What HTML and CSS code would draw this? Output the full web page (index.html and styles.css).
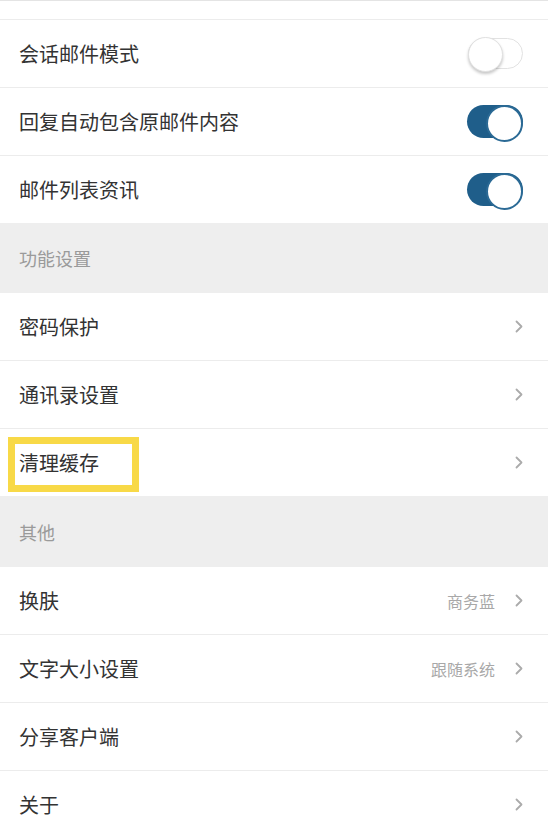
FILE: index.html
```html
<!DOCTYPE html>
<html lang="zh-CN">
<head>
<meta charset="utf-8">
<title>设置</title>
<link rel="stylesheet" href="styles.css">
</head>
<body>
<div class="top"></div>
<div class="group">
  <div class="row"><span class="label">会话邮件模式</span><span class="switch"></span></div>
  <div class="row"><span class="label">回复自动包含原邮件内容</span><span class="switch on"></span></div>
  <div class="row"><span class="label">邮件列表资讯</span><span class="switch on"></span></div>
</div>
<div class="section">功能设置</div>
<div class="group">
  <div class="row"><span class="label">密码保护</span><span class="right"><svg class="chev" width="8" height="13" viewBox="0 0 8 13"><polyline points="1.5,1.5 6.5,6.5 1.5,11.5"/></svg></span></div>
  <div class="row"><span class="label">通讯录设置</span><span class="right"><svg class="chev" width="8" height="13" viewBox="0 0 8 13"><polyline points="1.5,1.5 6.5,6.5 1.5,11.5"/></svg></span></div>
  <div class="row marked"><span class="label">清理缓存</span><span class="highlight"></span><span class="right"><svg class="chev" width="8" height="13" viewBox="0 0 8 13"><polyline points="1.5,1.5 6.5,6.5 1.5,11.5"/></svg></span></div>
</div>
<div class="section section-b">其他</div>
<div class="group">
  <div class="row"><span class="label">换肤</span><span class="right"><span class="value">商务蓝</span><svg class="chev" width="8" height="13" viewBox="0 0 8 13"><polyline points="1.5,1.5 6.5,6.5 1.5,11.5"/></svg></span></div>
  <div class="row"><span class="label">文字大小设置</span><span class="right"><span class="value">跟随系统</span><svg class="chev" width="8" height="13" viewBox="0 0 8 13"><polyline points="1.5,1.5 6.5,6.5 1.5,11.5"/></svg></span></div>
  <div class="row"><span class="label">分享客户端</span><span class="right"><svg class="chev" width="8" height="13" viewBox="0 0 8 13"><polyline points="1.5,1.5 6.5,6.5 1.5,11.5"/></svg></span></div>
  <div class="row"><span class="label">关于</span><span class="right"><svg class="chev" width="8" height="13" viewBox="0 0 8 13"><polyline points="1.5,1.5 6.5,6.5 1.5,11.5"/></svg></span></div>
</div>
</body>
</html>
```
FILE: styles.css
```css
* { box-sizing: border-box; }
html, body { margin: 0; padding: 0; background: #ffffff; }
body {
  font-family: "Noto Sans CJK SC", "Noto Sans", sans-serif;
  color: #333333;
  overflow: hidden;
}
.top {
  height: 20px;
  border-top: 1px solid #e4e4e4;
  border-bottom: 1px solid #ececec;
}
.group { background: #ffffff; }
.row {
  height: 68px;
  display: flex;
  align-items: center;
  justify-content: space-between;
  padding: 0 25px 0 19px;
  border-bottom: 1px solid #ececec;
}
.row:last-child { height: 67px; border-bottom: none; }
.marked { position: relative; }
.label {
  font-size: 20px;
  line-height: 1;
  color: #333333;
}
.section {
  height: 70px;
  background: #eeeeee;
  display: flex;
  align-items: center;
  padding-left: 19px;
  font-size: 18px;
  color: #9a9a9a;
}
.section-b { height: 71px; }
.right {
  display: flex;
  align-items: center;
  gap: 20px;
}
.value {
  font-size: 16px;
  color: #a8a8a8;
}
.chev { display: block; }
.chev polyline {
  fill: none;
  stroke: #ababab;
  stroke-width: 1.8;
  stroke-linecap: round;
  stroke-linejoin: round;
}
.switch {
  position: relative;
  width: 55px;
  height: 31px;
  border-radius: 16px;
  background: #ffffff;
  border: 1px solid #e2e2e2;
  flex: none;
}
.switch::after {
  content: "";
  position: absolute;
  left: -1px;
  top: -2px;
  width: 33px;
  height: 33px;
  border-radius: 50%;
  background: #ffffff;
  border: 1px solid #e0e0e0;
  box-shadow: 0 2px 3px rgba(0, 0, 0, 0.22);
}
.switch.on {
  width: 56px;
  height: 33px;
  background: #1f5e8a;
  border: none;
  border-radius: 17px;
}
.switch.on::after {
  left: auto;
  right: 0;
  top: 0;
  width: 33px;
  height: 33px;
  border: 2px solid #2b6a95;
  box-shadow: none;
}
.highlight {
  position: absolute;
  left: 8px;
  top: 8px;
  width: 131px;
  height: 55px;
  border: 7px solid #f8d947;
  pointer-events: none;
}
```
